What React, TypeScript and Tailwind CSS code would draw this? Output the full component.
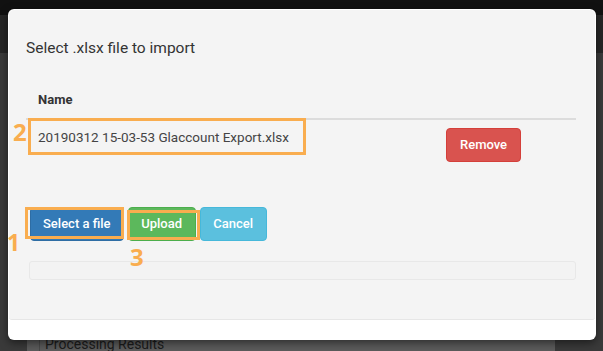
import React from "react";

const font = { fontFamily: "Roboto, 'Liberation Sans', sans-serif" };

// orange annotation box drawn over the dialog
function Mark({ className }: { className: string }) {
  return (
    <div className={"absolute border-[3px] border-[#f9ad4f] pointer-events-none " + className} />
  );
}

function Num({ n, className }: { n: string; className: string }) {
  return (
    <div
      className={"absolute text-[#f9ad4f] font-bold leading-[24px] " + className}
      style={{ fontFamily: "'Open Sans', 'Liberation Sans', sans-serif" }}
    >
      {n}
    </div>
  );
}

export default function App() {
  return (
    <div
      className="relative w-[603px] h-[351px] overflow-hidden bg-[#3a3a3a] flex flex-col"
      style={font}
    >
      {/* page behind the dialog */}
      <div className="h-[15px] bg-[#111111]" />
      <div className="h-[38px] bg-[#262626]" />
      <div className="flex-1 flex flex-col">
        <div className="mt-auto ml-[27px] w-[528px] h-[20px] bg-[#5b5b5b] pl-[12px]">
          <div className="h-full border-l border-[#4a4a4a] pl-[5px] pt-[5px] text-[14px] leading-[16px] text-[#1c1c1c]">
            Processing Results
          </div>
        </div>
      </div>

      {/* dialog */}
      <div className="absolute left-[8px] top-[9px] w-[588px] h-[331px] bg-white rounded-[6px] shadow-[0_3px_9px_rgba(0,0,0,0.5)] flex flex-col p-[1px]">
        <div className="relative flex-1 bg-[#f4f4f4] rounded-t-[5px] rounded-b-[3px] border-b border-[#e6e6e6] pl-[17px] pr-[19px] flex flex-col">
          <h4 className="mt-[28px] text-[15.5px] leading-[20px] text-[#333]">
            Select .xlsx file to import
          </h4>

          <table className="mt-[25px] w-full text-[13px] text-[#444]">
            <thead>
              <tr className="border-b-2 border-[#dcdcdc]">
                <th className="text-left font-bold pl-[12px] pt-[8px] pb-[9px] leading-[18px] text-[#333]">
                  Name
                </th>
                <th />
              </tr>
            </thead>
            <tbody>
              <tr>
                <td className="align-top pl-[12px] pt-[8px] pb-[8px] leading-[18px] text-[13.5px] text-[#444]">
                  20190312 15-03-53 Glaccount Export.xlsx
                </td>
                <td className="align-top pt-[8px] pb-[8px] w-[130px]">
                  <button className="h-[34px] px-[13px] rounded-[4px] bg-[#d9534f] border border-[#d43f3a] text-white text-[13px] font-medium">
                    Remove
                  </button>
                </td>
              </tr>
            </tbody>
          </table>

          <div className="mt-[37px] ml-[4px] flex gap-[4px] text-[13px] font-medium text-white">
            <button className="h-[34px] px-[12px] rounded-[4px] bg-[#337ab7] border border-[#2e6da4]">
              Select a file
            </button>
            <button className="h-[34px] w-[68px] rounded-[4px] bg-[#5cb85c] border border-[#4cae4c]">
              Upload
            </button>
            <button className="h-[34px] w-[67px] rounded-[4px] bg-[#5bc0de] border border-[#46b8da]">
              Cancel
            </button>
          </div>

          <div className="mt-[20px] ml-[3px] h-[19px] rounded-[3px] border border-[#e8e8e8] bg-[#f3f3f3]" />

          {/* annotations */}
          <Mark className="left-[19px] top-[108px] w-[278px] h-[37px]" />
          <Num n="2" className="left-[4px] top-[110px] text-[24px]" />
          <Mark className="left-[16px] top-[197px] w-[99px] h-[32px]" />
          <Num n="1" className="left-[-2px] top-[220px] text-[23px]" />
          <Mark className="left-[118px] top-[200px] w-[73px] h-[30px]" />
          <Num n="3" className="left-[121px] top-[235px] text-[24px]" />
        </div>
        <div className="h-[19px]" />
      </div>
    </div>
  );
}
